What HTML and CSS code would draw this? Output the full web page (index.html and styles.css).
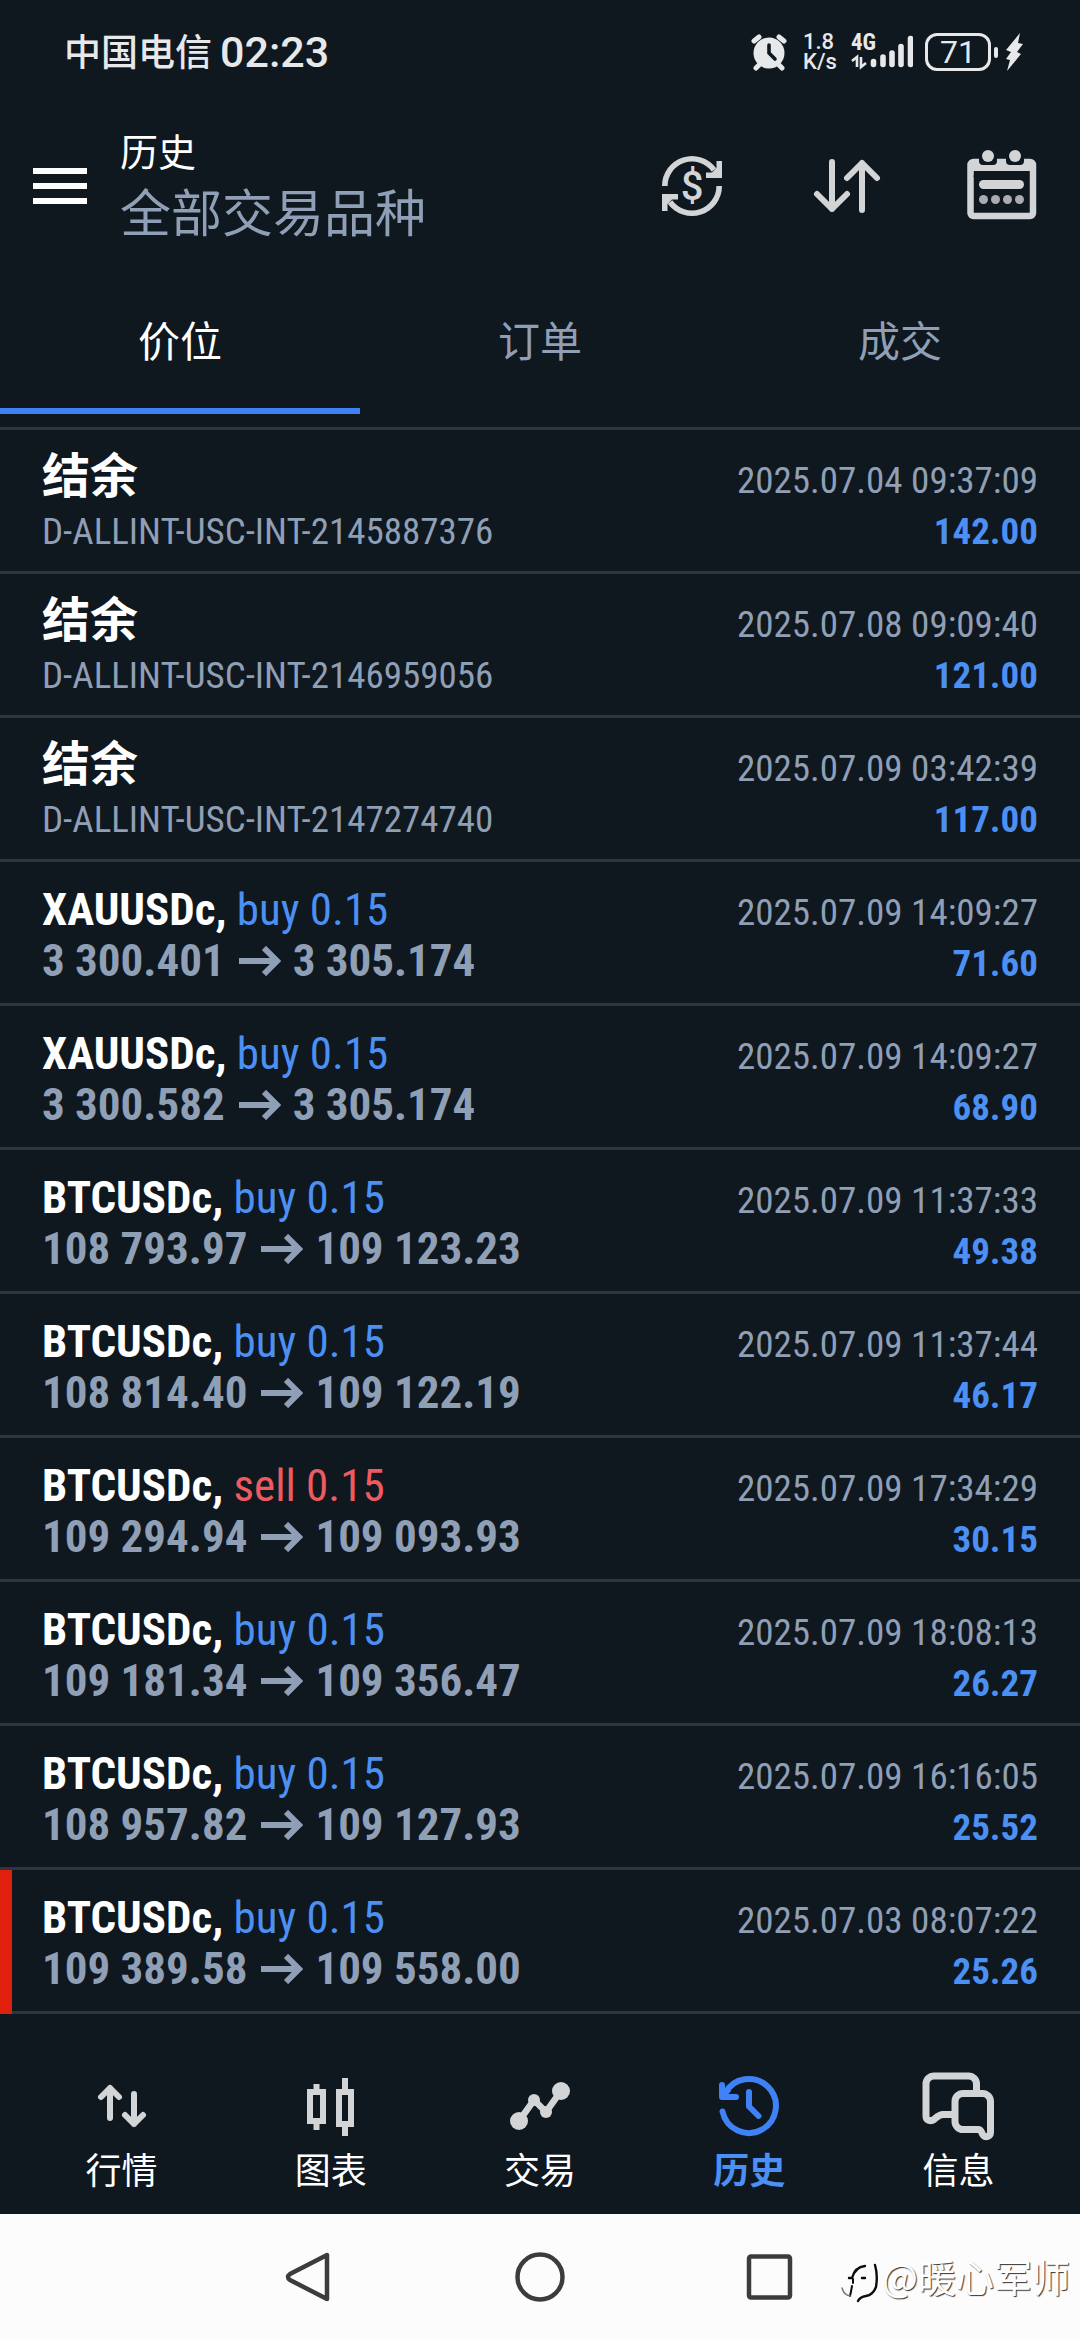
FILE: index.html
```html
<!DOCTYPE html>
<html lang="zh-CN">
<head>
<meta charset="utf-8">
<meta name="viewport" content="width=device-width, initial-scale=1">
<title>历史</title>
<link rel="stylesheet" href="styles.css">
</head>
<body>
<svg class="defs" aria-hidden="true">
  <symbol id="arrow" viewBox="0 0 42 30"><path d="M0 15H38M25 2 38 15 25 28" fill="none" stroke="currentColor" stroke-width="6"/></symbol>
</svg>

<div class="status-bar">
  <div class="carrier"><span>中国电信</span><span class="clock">02:23</span></div>
  <div class="status-icons">
    <svg class="alarm" viewBox="0 0 36 38">
      <g stroke="#e6e8ea" stroke-width="5" stroke-linecap="round"><path d="M3 8 8 4M33 8 28 4M8 32 5 35M28 32 31 35"/></g>
      <circle cx="18" cy="20" r="15.500" fill="#e6e8ea"/>
      <path d="M18 12v8l6 6" fill="none" stroke="#0f171f" stroke-width="3.600" stroke-linecap="round"/>
    </svg>
    <div class="speed"><span>1.8</span><span>K/s</span></div>
    <div class="signal">
      <span class="net">4G</span>
      <svg viewBox="0 0 62 38">
        <g stroke="#e6e8ea" stroke-width="5.600" stroke-linecap="round"><path d="M22.500 28.500v3M32 24v7.500M41 20v11.500M50 13.500v18M59.500 5.500v26"/></g>
        <path d="M1 28 6 24v10M10 24v10l5-4" fill="none" stroke="#e6e8ea" stroke-width="2.600"/>
      </svg>
    </div>
    <div class="power">
      <span class="battery">71</span><span class="nub"></span>
      <svg class="bolt" viewBox="0 0 18 38"><path d="M15 0 1 17l5 2-5 7 4 1-3 11 14-17-4-2 6-8-5-1z" fill="#e6e8ea"/></svg>
    </div>
  </div>
</div>

<header class="app-bar">
  <button class="menu" aria-label="菜单"><span></span><span></span><span></span></button>
  <div class="titles"><h1>历史</h1><p>全部交易品种</p></div>
  <div class="actions">
    <button aria-label="货币">
      <svg viewBox="0 0 72 72">
        <g id="half"><path d="M8.800 36A27.200 27.200 0 0 1 58 20" fill="none" stroke="#d2d4d6" stroke-width="5.600"/><path d="M66 11V28H50V22.500H56L60.500 18V11z" fill="#d2d4d6"/></g>
        <use href="#half" transform="rotate(180 36 36)"/>
        <text x="36" y="50" class="dollar">$</text>
      </svg>
    </button>
    <button aria-label="排序">
      <svg viewBox="0 0 72 72"><path d="M21 12V59M6 44 21 59 36 44M51 60V13M36 28 51 13 66 28" fill="none" stroke="#d2d4d6" stroke-width="6" stroke-linecap="round" stroke-linejoin="round"/></svg>
    </button>
    <button aria-label="日历">
      <svg viewBox="0 0 72 72">
        <rect x="4.500" y="12" width="62.500" height="54" rx="3" fill="none" stroke="#d2d4d6" stroke-width="6.500"/>
        <path d="M4 12H68V21H4z" fill="#d2d4d6"/>
        <path d="M7.500 27a6 6 0 0 1 6-6h44a6 6 0 0 1 6 6z" fill="#0f171f"/>
        <path d="M13 4h18v7a4 4 0 0 1-4 4H17a4 4 0 0 1-4-4zM40 4h18v7a4 4 0 0 1-4 4H44a4 4 0 0 1-4-4z" fill="#0f171f"/>
        <circle cx="22" cy="6" r="6" fill="#d2d4d6"/><circle cx="49" cy="6" r="6" fill="#d2d4d6"/>
        <rect x="13" y="30" width="45" height="9" rx="4.500" fill="#d2d4d6"/>
        <g fill="#a9acb0"><circle cx="17.500" cy="49.500" r="4.500"/><circle cx="29.500" cy="49.500" r="4.500"/><circle cx="41.500" cy="49.500" r="4.500"/><circle cx="53.500" cy="49.500" r="4.500"/></g>
      </svg>
    </button>
  </div>
</header>

<nav class="tabs">
  <button class="active">价位</button>
  <button>订单</button>
  <button>成交</button>
</nav>

<main>
  <ul class="deals">
    <li><div class="line"><b class="balance">结余</b><time>2025.07.04 09:37:09</time></div><div class="line"><span class="note">D-ALLINT-USC-INT-2145887376</span><b class="profit">142.00</b></div></li>
    <li><div class="line"><b class="balance">结余</b><time>2025.07.08 09:09:40</time></div><div class="line"><span class="note">D-ALLINT-USC-INT-2146959056</span><b class="profit">121.00</b></div></li>
    <li><div class="line"><b class="balance">结余</b><time>2025.07.09 03:42:39</time></div><div class="line"><span class="note">D-ALLINT-USC-INT-2147274740</span><b class="profit">117.00</b></div></li>
    <li><div class="line"><span class="deal"><b>XAUUSDc,</b> <span class="buy">buy 0.15</span></span><time>2025.07.09 14:09:27</time></div><div class="line"><b class="price">3 300.401<svg><use href="#arrow"/></svg>3 305.174</b><b class="profit">71.60</b></div></li>
    <li><div class="line"><span class="deal"><b>XAUUSDc,</b> <span class="buy">buy 0.15</span></span><time>2025.07.09 14:09:27</time></div><div class="line"><b class="price">3 300.582<svg><use href="#arrow"/></svg>3 305.174</b><b class="profit">68.90</b></div></li>
    <li><div class="line"><span class="deal"><b>BTCUSDc,</b> <span class="buy">buy 0.15</span></span><time>2025.07.09 11:37:33</time></div><div class="line"><b class="price">108 793.97<svg><use href="#arrow"/></svg>109 123.23</b><b class="profit">49.38</b></div></li>
    <li><div class="line"><span class="deal"><b>BTCUSDc,</b> <span class="buy">buy 0.15</span></span><time>2025.07.09 11:37:44</time></div><div class="line"><b class="price">108 814.40<svg><use href="#arrow"/></svg>109 122.19</b><b class="profit">46.17</b></div></li>
    <li><div class="line"><span class="deal"><b>BTCUSDc,</b> <span class="sell">sell 0.15</span></span><time>2025.07.09 17:34:29</time></div><div class="line"><b class="price">109 294.94<svg><use href="#arrow"/></svg>109 093.93</b><b class="profit">30.15</b></div></li>
    <li><div class="line"><span class="deal"><b>BTCUSDc,</b> <span class="buy">buy 0.15</span></span><time>2025.07.09 18:08:13</time></div><div class="line"><b class="price">109 181.34<svg><use href="#arrow"/></svg>109 356.47</b><b class="profit">26.27</b></div></li>
    <li><div class="line"><span class="deal"><b>BTCUSDc,</b> <span class="buy">buy 0.15</span></span><time>2025.07.09 16:16:05</time></div><div class="line"><b class="price">108 957.82<svg><use href="#arrow"/></svg>109 127.93</b><b class="profit">25.52</b></div></li>
    <li class="marked"><div class="line"><span class="deal"><b>BTCUSDc,</b> <span class="buy">buy 0.15</span></span><time>2025.07.03 08:07:22</time></div><div class="line"><b class="price">109 389.58<svg><use href="#arrow"/></svg>109 558.00</b><b class="profit">25.26</b></div></li>
  </ul>
</main>

<nav class="bottom-nav">
  <a href="#quotes">
    <svg viewBox="0 0 72 72"><path d="M24 48V18M15 27 24 18 33 27M48 24V54M39 45 48 54 57 45" fill="none" stroke="currentColor" stroke-width="6" stroke-linecap="round" stroke-linejoin="round"/></svg>
    <span>行情</span>
  </a>
  <a href="#chart">
    <svg viewBox="0 0 72 72"><g fill="none" stroke="currentColor" stroke-width="6"><path d="M15 22H28V51H15zM21.500 14V20M21.500 53V60M44 22H56V54H44zM50 8V20M50 56V66"/></g></svg>
    <span>图表</span>
  </a>
  <a href="#trade">
    <svg viewBox="0 0 72 72"><path d="M15 51 30 30 42 42 57 21" fill="none" stroke="currentColor" stroke-width="6.500"/><g fill="currentColor"><circle cx="15" cy="51" r="9"/><circle cx="30" cy="30" r="6"/><circle cx="42" cy="42" r="6"/><circle cx="57" cy="21" r="9"/></g></svg>
    <span>交易</span>
  </a>
  <a href="#history" class="current" aria-current="page">
    <svg viewBox="0 0 72 72"><path d="M9.500 41.500A27 27 0 1 0 12 23.500M36 22V36.500L45.500 46M9 15V27H23M9.500 26 15 20" fill="none" stroke="currentColor" stroke-width="6" stroke-linecap="round" stroke-linejoin="round"/></svg>
    <span>历史</span>
  </a>
  <a href="#messages">
    <svg viewBox="0 0 72 72"><g fill="none" stroke="currentColor" stroke-width="7" stroke-linejoin="round"><path d="M54.500 22V14a8 8 0 0 0-8-8H12a8 8 0 0 0-8 8V46C4 51 9 51.500 12 49.500C15 47 17 44.500 21 44.500H31"/><path d="M41 23.500H60.500a8 8 0 0 1 8 8V62C68.500 67 63.500 67.500 61.500 65.500C59 63 60 59.500 56 59.500H41a8 8 0 0 1-8-8V31.500a8 8 0 0 1 8-8z"/></g></svg>
    <span>信息</span>
  </a>
</nav>

<footer class="system-nav">
  <button aria-label="返回"><svg viewBox="0 0 60 60"><path d="M47 8V52L10 33Q6 30 10 27z" fill="none" stroke="#3c3c3c" stroke-width="4.500" stroke-linejoin="round"/></svg></button>
  <button aria-label="主页"><svg viewBox="0 0 60 60"><circle cx="30" cy="30" r="22.500" fill="none" stroke="#3c3c3c" stroke-width="4.500"/></svg></button>
  <button aria-label="最近任务"><svg viewBox="0 0 60 60"><rect x="9" y="9.500" width="41" height="41" rx="2" fill="none" stroke="#3c3c3c" stroke-width="4.500"/></svg></button>
  <div class="watermark">
    <svg viewBox="0 0 38 46"><g fill="none" stroke="#0c0c0c" stroke-linecap="round"><path d="M34 6Q37 16 35 28Q32 36 25 37Q19 38 17 42M8 19H11Q14 8 24 7" stroke-width="2.400"/><path d="M12 20V24M11 27Q10 33 9 37" stroke-width="2"/><path d="M1 29Q3 36 9 37" stroke="#777" stroke-width="1.500"/><path d="M21 19H24" stroke-width="2.400"/></g></svg>
    <span>@暖心军师</span>
  </div>
</footer>
</body>
</html>
```
FILE: styles.css
```css
:root {
  --bg: #0f171f;
  --line: #2d353f;
  --muted: #8f9fb5;
  --blue: #4b90f2;
  --accent: #3e82f5;
  --cjk: "Noto Sans CJK SC", sans-serif;
}

* { box-sizing: border-box; }

body {
  margin: 0;
  min-height: 100vh;
  display: flex;
  flex-direction: column;
  background: var(--bg);
  color: #fff;
  font-family: "Roboto Condensed", "Noto Sans CJK SC", sans-serif;
}

button {
  padding: 0;
  border: 0;
  background: none;
  color: inherit;
  font: inherit;
}

svg { display: block; }
.defs { position: absolute; width: 0; height: 0; }

/* phone status bar */
.status-bar {
  display: flex;
  justify-content: space-between;
  align-items: center;
  height: 104px;
  padding: 0 57px 0 64px;
  color: #e6e8ea;
}
.carrier {
  display: flex;
  align-items: center;
  gap: 8px;
  font: 500 37px/48px var(--cjk);
}
.carrier span:first-child { padding-bottom: 4px; }
.clock { font: 500 43px/52px Roboto, sans-serif; }
.status-icons { display: flex; align-items: center; }
.alarm { width: 36px; height: 38px; margin-right: 16px; }
.speed {
  display: flex;
  flex-direction: column;
  width: 34px;
  margin-right: 14px;
  font: 500 22px/20px Roboto, sans-serif;
}
.signal { position: relative; width: 62px; margin-right: 12px; }
.net {
  position: absolute;
  top: 0;
  left: 0;
  font: 700 23px/19px "Roboto Condensed", sans-serif;
}
.power { display: flex; align-items: center; gap: 3px; }
.battery {
  width: 66px;
  height: 38px;
  border: 3px solid #e6e8ea;
  border-radius: 12px;
  font: 400 32px/32px Roboto, sans-serif;
  text-align: center;
}
.nub { width: 4px; height: 11px; border-radius: 2px; background: #e6e8ea; }
.bolt { width: 18px; height: 38px; margin-left: 4px; }

/* title bar */
.app-bar {
  display: flex;
  align-items: center;
  height: 164px;
  padding: 0 42px 0 33px;
}
.menu { display: grid; gap: 9px; width: 54px; }
.menu span { height: 6px; background: #fff; }
.titles { margin-left: 33px; padding-bottom: 12px; font-family: var(--cjk); }
.titles h1 { margin: 0; font-size: 38px; font-weight: 400; line-height: 60px; }
.titles p { margin: 0; font-size: 51px; line-height: 60px; color: var(--muted); }
.actions { display: flex; gap: 83px; margin-left: auto; }
.actions svg { width: 72px; height: 72px; overflow: visible; }
.dollar {
  font: 500 40px Roboto, sans-serif;
  fill: #d2d4d6;
  text-anchor: middle;
}

/* tabs */
.tabs {
  display: grid;
  grid-template-columns: repeat(3, 1fr);
  padding-bottom: 13px;
  border-bottom: 3px solid var(--line);
}
.tabs button {
  height: 146px;
  padding-bottom: 10px;
  border-top: 6px solid transparent;
  border-bottom: 6px solid transparent;
  font: 400 42px/60px var(--cjk);
  padding-bottom: 4px;
  color: var(--muted);
}
.tabs .active { color: #fff; border-bottom-color: var(--accent); }

/* deal list */
main { flex: 1; }
.deals { margin: 0; padding: 0; list-style: none; }
.deals li {
  position: relative;
  padding: 21px 42px 18px;
  border-bottom: 3px solid var(--line);
}
.marked::before {
  content: "";
  position: absolute;
  inset: 0 auto -3px 0;
  width: 12px;
  background: #e0200c;
}
.line {
  display: flex;
  justify-content: space-between;
  align-items: baseline;
  height: 51px;
  line-height: 51px;
}
.balance { font: 700 48px/43px var(--cjk); }
.deal, .price { font-size: 45px; line-height: 53px; }
.note, time, .profit { font-size: 37px; }
.note { line-height: 59px; }
.note, time, .price { color: var(--muted); }
.buy, .profit { color: var(--blue); }
.sell { color: #ee5a60; }
.price svg {
  display: inline-block;
  width: 42px;
  height: 30px;
  margin: 0 12px 0 14px;
}

/* app navigation */
.bottom-nav {
  display: grid;
  grid-template-columns: repeat(5, 1fr);
  padding: 56px 17px 26px;
}
.bottom-nav a {
  display: flex;
  flex-direction: column;
  align-items: center;
  gap: 6px;
  color: #fff;
  font: 400 36px/40px var(--cjk);
  text-decoration: none;
}
.bottom-nav svg { width: 72px; height: 72px; color: #d2d4d6; }
.bottom-nav .current { color: var(--blue); font-weight: 700; }
.bottom-nav .current svg { color: var(--accent); }

/* system navigation */
.system-nav {
  position: relative;
  display: flex;
  justify-content: center;
  align-items: center;
  gap: 170px;
  height: 126px;
  background: #fcfcfc;
}
.system-nav button svg { width: 60px; height: 60px; }
.watermark {
  position: absolute;
  right: 10px;
  bottom: 35px;
  display: flex;
  align-items: center;
  gap: 3px;
  font: 400 38px/52px var(--cjk);
  color: #fff;
  text-shadow: 1px 1px 1px #333;
}
.watermark svg { width: 38px; height: 46px; margin-top: 12px; }
```
